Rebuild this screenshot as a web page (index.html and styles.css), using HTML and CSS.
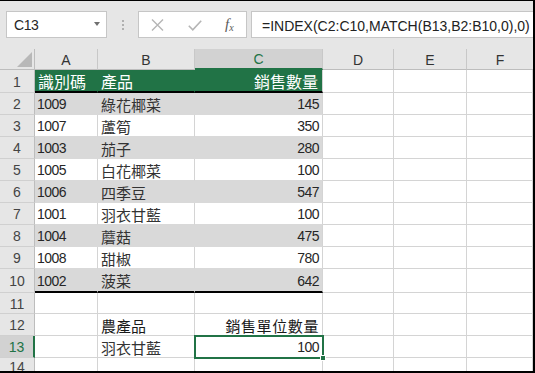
FILE: index.html
```html
<!DOCTYPE html>
<html lang="zh-Hant">
<head>
<meta charset="utf-8">
<title>Sheet</title>
<link rel="stylesheet" href="styles.css">
</head>
<body>
<div class="app">
  <div class="toolbar">
    <div class="namebox"><span class="ref">C13</span><span class="caret"></span></div>
    <div class="dots"><i></i><i></i><i></i></div>
    <div class="btns">
      <svg class="ico" width="13" height="12" viewBox="0 0 13 12"><path d="M1 0.5 L12 11.5 M12 0.5 L1 11.5" stroke="#b5b5b5" stroke-width="1.4" fill="none"/></svg>
      <svg class="ico" width="14" height="11" viewBox="0 0 14 11"><path d="M0.8 5.8 L4.8 9.8 L13.2 0.8" stroke="#b5b5b5" stroke-width="1.6" fill="none"/></svg>
      <span class="fx">f<span class="fxs">x</span></span>
    </div>
    <div class="formula">=INDEX(C2:C10,MATCH(B13,B2:B10,0),0)</div>
  </div>

  <div class="sheet">
    <div class="corner"><span class="tri"></span></div>
    <div class="ch">A</div><div class="ch">B</div><div class="ch ch-sel">C</div><div class="ch">D</div><div class="ch">E</div><div class="ch ch-end">F</div>

    <div class="rh">1</div>
    <div class="c hd zh16">識別碼</div><div class="c hd zh16">產品</div><div class="c hd hd-end zh16 r">銷售數量</div>
    <div class="c"></div><div class="c"></div><div class="c"></div>

    <div class="rh">2</div>
    <div class="c band num">1009</div><div class="c band zh">綠花椰菜</div><div class="c band band-end num r">145</div>
    <div class="c"></div><div class="c"></div><div class="c"></div>

    <div class="rh">3</div>
    <div class="c wt num">1007</div><div class="c wt zh">蘆筍</div><div class="c wt num r">350</div>
    <div class="c"></div><div class="c"></div><div class="c"></div>

    <div class="rh">4</div>
    <div class="c band num">1003</div><div class="c band zh">茄子</div><div class="c band band-end num r">280</div>
    <div class="c"></div><div class="c"></div><div class="c"></div>

    <div class="rh">5</div>
    <div class="c wt num">1005</div><div class="c wt zh">白花椰菜</div><div class="c wt num r">100</div>
    <div class="c"></div><div class="c"></div><div class="c"></div>

    <div class="rh">6</div>
    <div class="c band num">1006</div><div class="c band zh">四季豆</div><div class="c band band-end num r">547</div>
    <div class="c"></div><div class="c"></div><div class="c"></div>

    <div class="rh">7</div>
    <div class="c wt num">1001</div><div class="c wt zh">羽衣甘藍</div><div class="c wt num r">100</div>
    <div class="c"></div><div class="c"></div><div class="c"></div>

    <div class="rh">8</div>
    <div class="c band num">1004</div><div class="c band zh">蘑菇</div><div class="c band band-end num r">475</div>
    <div class="c"></div><div class="c"></div><div class="c"></div>

    <div class="rh">9</div>
    <div class="c wt num">1008</div><div class="c wt zh">甜椒</div><div class="c wt num r">780</div>
    <div class="c"></div><div class="c"></div><div class="c"></div>

    <div class="rh">10</div>
    <div class="c band last num">1002</div><div class="c band last zh">菠菜</div><div class="c band band-end last num r">642</div>
    <div class="c"></div><div class="c"></div><div class="c"></div>

    <div class="rh">11</div>
    <div class="c"></div><div class="c"></div><div class="c"></div>
    <div class="c"></div><div class="c"></div><div class="c"></div>

    <div class="rh">12</div>
    <div class="c"></div><div class="c zh lbl">農產品</div><div class="c zh lbl wide r">銷售單位數量</div>
    <div class="c"></div><div class="c"></div><div class="c"></div>

    <div class="rh rh-sel">13</div>
    <div class="c"></div><div class="c zh">羽衣甘藍</div><div class="c num r sel">100<span class="handle"></span></div>
    <div class="c"></div><div class="c"></div><div class="c"></div>

    <div class="rh rh-end">14</div>
    <div class="c"></div><div class="c"></div><div class="c"></div>
    <div class="c"></div><div class="c"></div><div class="c"></div>
  </div>
</div>
</body>
</html>
```

FILE: styles.css
```css
* { box-sizing: border-box; }

html, body {
  margin: 0;
  padding: 0;
  background: #ffffff;
}

body {
  font-family: "Liberation Sans", "Noto Sans CJK TC", sans-serif;
  color: #262626;
}

.app {
  width: 535px;
  height: 373px;
  border-top: 1px solid #000;
  border-right: 2px solid #000;
  border-bottom: 2px solid #000;
  display: flex;
  flex-direction: column;
  overflow: hidden;
  background: #e6e6e6;
}

/* ---------- formula bar ---------- */
.toolbar {
  height: 48px;
  flex: none;
  display: flex;
  align-items: flex-start;
  padding-top: 10px;
  background: #e6e6e6;
}

.namebox {
  margin-left: 6px;
  width: 101px;
  height: 27px;
  background: #fff;
  border: 1px solid #c6c6c6;
  display: flex;
  align-items: center;
  justify-content: space-between;
  padding: 1px 6px 0 7px;
}

.ref {
  font-size: 14px;
  letter-spacing: -0.4px;
  color: #262626;
}

.caret {
  width: 0;
  height: 0;
  border-left: 3.5px solid transparent;
  border-right: 3.5px solid transparent;
  border-top: 4px solid #707070;
  margin-top: -2px;
}

.dots {
  width: 31px;
  height: 27px;
  display: flex;
  flex-direction: column;
  align-items: center;
  justify-content: center;
  gap: 2px;
}

.dots i {
  width: 2px;
  height: 2px;
  background: #b0b0b0;
}

.btns {
  width: 109px;
  height: 27px;
  background: #fff;
  border: 1px solid #c6c6c6;
  display: flex;
  align-items: center;
  padding-left: 12px;
  gap: 0;
}

.btns .ico:nth-child(1) { margin-right: 24px; margin-top: 1px; }
.btns .ico:nth-child(2) { margin-right: 23px; margin-top: 1px; }

.fx {
  font-family: "Liberation Serif", serif;
  font-style: italic;
  font-size: 15px;
  color: #5a5a5a;
  margin-top: -1px;
}

.fxs {
  font-size: 10px;
  position: relative;
  top: 2px;
}

.formula {
  flex: 1;
  margin-left: 4px;
  height: 27px;
  background: #fff;
  border: 1px solid #c6c6c6;
  border-right: none;
  display: flex;
  align-items: center;
  padding: 2px 0 0 10px;
  font-size: 14px;
  color: #222;
  white-space: nowrap;
}

/* ---------- grid ---------- */
.sheet {
  flex: 1;
  display: grid;
  grid-template-columns: 35px 63px 97px 128px 71px 73px 1fr;
  grid-template-rows: 21px 23px repeat(8, 22px) 24px 21px 22px 22px 1fr;
  background: #fff;
}

.corner {
  background: #e6e6e6;
  border-right: 1px solid #bdbdbd;
  border-bottom: 1px solid #bdbdbd;
  position: relative;
}

.tri {
  position: absolute;
  right: 2px;
  bottom: 2px;
  width: 0;
  height: 0;
  border-left: 15px solid transparent;
  border-bottom: 15px solid #b8b8b8;
}

.ch {
  background: #e6e6e6;
  border-right: 1px solid #c8c8c8;
  border-bottom: 1px solid #bdbdbd;
  display: flex;
  align-items: center;
  justify-content: center;
  font-size: 14px;
  color: #333;
  padding-top: 1px;
}

.ch-sel {
  background: #d2d2d2;
  color: #217346;
  border-bottom: 2px solid #217346;
}

.ch-end { border-right: none; }

.rh {
  background: #e6e6e6;
  border-right: 1px solid #bdbdbd;
  border-bottom: 1px solid #d0d0d0;
  display: flex;
  align-items: center;
  justify-content: center;
  font-size: 14px;
  color: #444;
  padding-top: 1px;
}

.rh-sel {
  background: #d2d2d2;
  color: #217346;
  border-right: 2px solid #217346;
}

.rh-end { border-bottom: none; }

.c {
  border-right: 1px solid #d4d4d4;
  border-bottom: 1px solid #d4d4d4;
  display: flex;
  align-items: center;
  padding: 1px 3px 0 2px;
  white-space: nowrap;
  overflow: visible;
  min-width: 0;
}

.r { justify-content: flex-end; padding-right: 3px; }

.num {
  font-family: "Liberation Sans", sans-serif;
  font-size: 14px;
  letter-spacing: -0.5px;
  color: #262626;
}

.zh {
  font-family: "Noto Sans CJK TC", "Noto Sans CJK SC", sans-serif;
  font-size: 15px;
  color: #333;
  padding-left: 3px;
}

.zh16 {
  font-family: "Noto Sans CJK TC", "Noto Sans CJK SC", sans-serif;
  font-size: 16px;
  padding-left: 3px;
}

.hd {
  background: #217346;
  color: #fff;
  border-right-color: #217346;
  border-bottom: 2px solid #000;
}

.hd-end { border-right-color: #d4d4d4; padding-right: 4px; }

.band {
  background: #d9d9d9;
  border-right-color: #d9d9d9;
  border-bottom-color: #d9d9d9;
}

.band-end { border-right-color: #d4d4d4; }

.wt { border-bottom-color: #d9d9d9; }

.last { border-bottom: 2px solid #000; }

.lbl { color: #1a1a1a; }

.wide { letter-spacing: 0.6px; padding-right: 3px; }

.sel { position: relative; }

.sel::after {
  content: "";
  position: absolute;
  left: -1px;
  top: -1px;
  right: -2px;
  bottom: -2px;
  border: 2px solid #217346;
  pointer-events: none;
}

.handle {
  position: absolute;
  right: -4px;
  bottom: -4px;
  width: 6px;
  height: 6px;
  background: #217346;
  border: 1px solid #fff;
  z-index: 2;
}
```
